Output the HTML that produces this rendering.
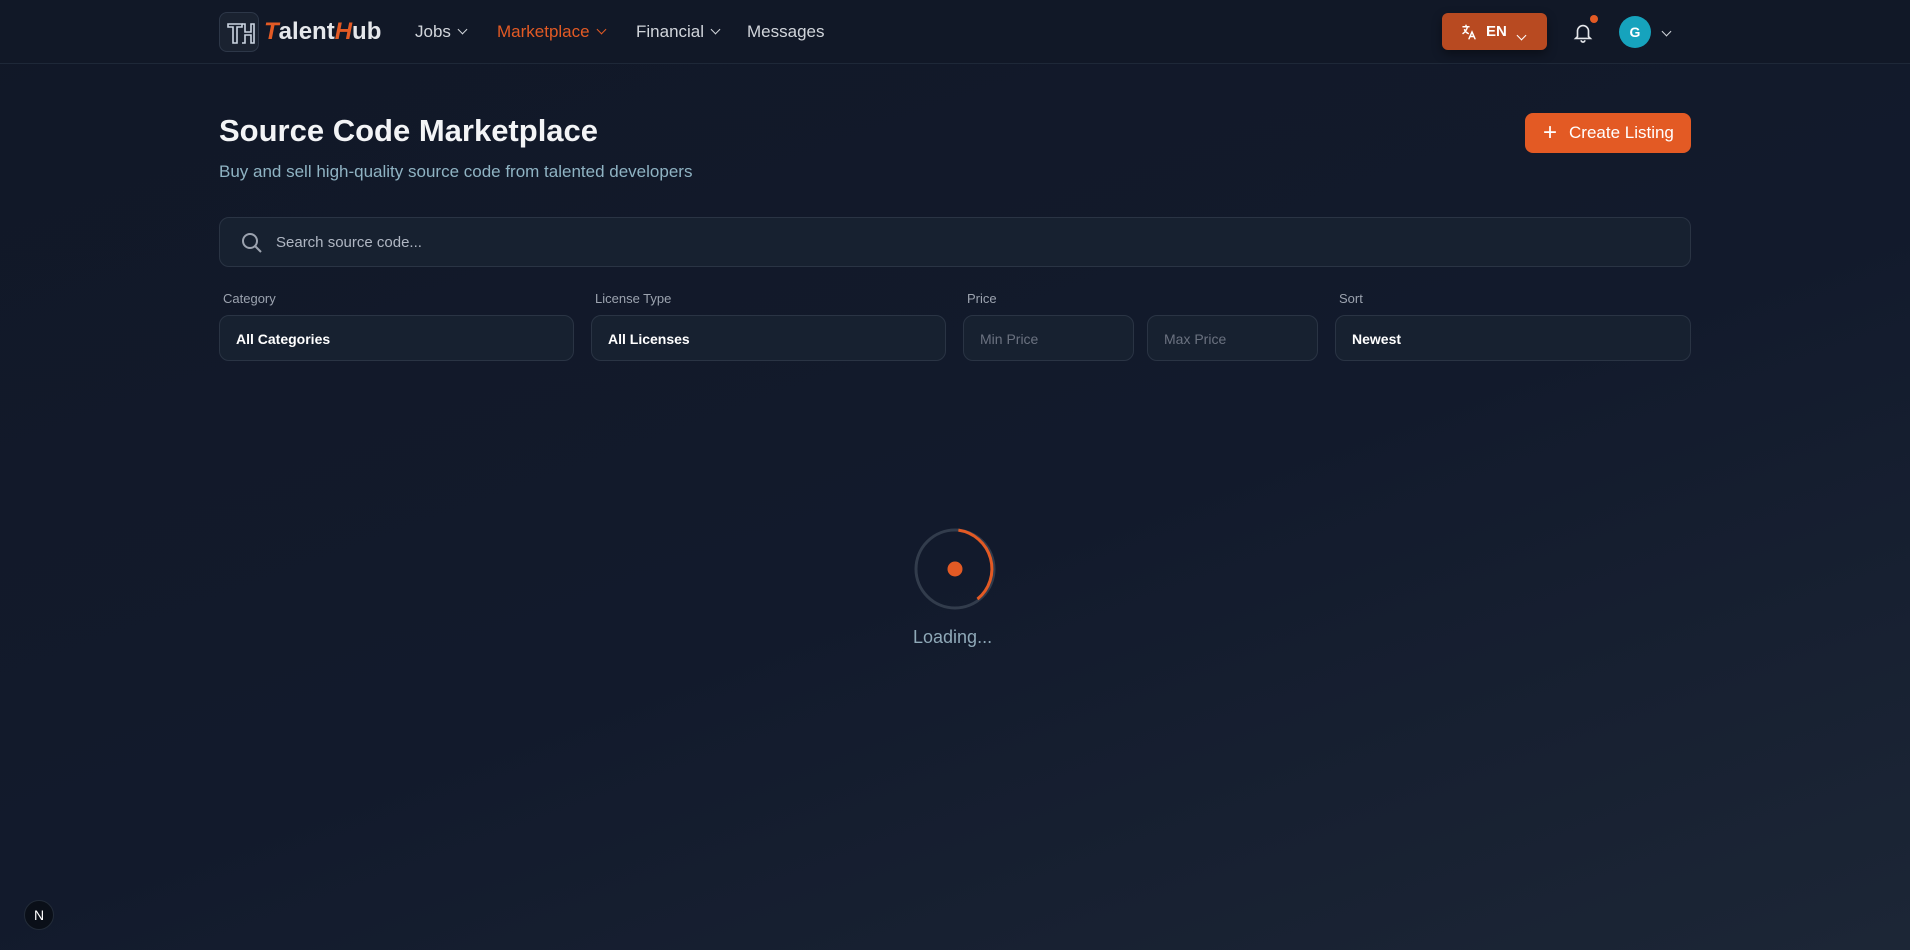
<!DOCTYPE html>
<html><head><meta charset="utf-8"><style>
*{box-sizing:border-box;margin:0;padding:0}
body{width:1910px;height:950px;overflow:hidden;font-family:"Liberation Sans",sans-serif;background:linear-gradient(160deg,#111827 0%,#121a2c 55%,#1c2636 100%);color:#e5e7eb;position:relative}
.nav{position:absolute;left:0;top:0;width:1910px;height:64px;border-bottom:1px solid #1e2838;background:#111827}
.abs{position:absolute}
.logo{left:219px;top:12px;width:40px;height:40px;border:1px solid #2d3748;border-radius:8px;background:#1a2230}
.brand{left:264px;top:18px;font-size:24px;font-weight:bold;color:#e5e7eb}
.brand i{color:#e35a24}
.ni{top:22px;font-size:17px;color:#d1d5db}
.chev{display:inline-block;width:7px;height:7px;border-right:1.5px solid currentColor;border-bottom:1.5px solid currentColor;transform:rotate(45deg);margin-left:8px;position:relative;top:-4px}
.en{left:1442px;top:13px;width:105px;height:37px;background:#b84a21;border-radius:6px;color:#fff;font-weight:bold;font-size:15px;box-shadow:0 4px 10px rgba(0,0,0,.4)}
.box{border:1px solid #2a3444;background:#172130;border-radius:10px}
.lbl{top:291px;font-size:13px;color:#9ca3af}
.inp{top:315px;height:46px;font-size:14px;padding:15px 16px;color:#fff;font-weight:bold}
.ph{color:#6b7280;font-weight:normal}
</style></head><body>
<div class="nav"></div>
<div class="abs logo"><svg width="40" height="40" viewBox="0 0 40 40" fill="none" stroke="#cbd5e1" stroke-width="1.6"><path d="M8 11h14v3h-5v16h-4V14H8z"/><path d="M22 11h3v8h6v-8h3v19h-3v-8h-6v8h-3"/></svg></div>
<div class="abs brand"><i>T</i>alent<i>H</i>ub</div>
<div class="abs ni" style="left:415px">Jobs<span class="chev"></span></div>
<div class="abs ni" style="left:497px;color:#e35a24">Marketplace<span class="chev"></span></div>
<div class="abs ni" style="left:636px">Financial<span class="chev"></span></div>
<div class="abs ni" style="left:747px">Messages</div>
<div class="abs en"><svg class="abs" style="left:18px;top:10px" width="18" height="18" viewBox="0 0 24 24" fill="none" stroke="#fff" stroke-width="2" stroke-linecap="round"><path d="M4 5h8M8 3v2M10 5c-1 4-3 7-6 9M6 9c1 2 3 4 5 5M12 21l4-9 4 9M13.5 18h5"/></svg><span class="abs" style="left:44px;top:10px">EN</span><span class="abs chev" style="left:76px;top:13px;color:#fff;margin:0"></span></div>
<svg class="abs" style="left:1572px;top:20px" width="22" height="24" viewBox="0 0 24 24" fill="none" stroke="#e5e7eb" stroke-width="1.8"><path d="M6 17V11a6 6 0 0 1 12 0v6l2 2H4z"/><path d="M10 21a2 2 0 0 0 4 0"/></svg>
<div class="abs" style="left:1590px;top:15px;width:8px;height:8px;border-radius:50%;background:#e35a24"></div>
<div class="abs" style="left:1619px;top:16px;width:32px;height:32px;border-radius:50%;background:#16a3bd;color:#fff;font-weight:bold;font-size:14px;text-align:center;line-height:32px">G</div>
<span class="abs chev" style="left:1663px;top:22px;margin:0;color:#d1d5db"></span>
<div class="abs" style="left:219px;top:113px;font-size:31px;font-weight:bold;color:#f3f4f6">Source Code Marketplace</div>
<div class="abs" style="left:219px;top:162px;font-size:17px;color:#8fb3c3">Buy and sell high-quality source code from talented developers</div>
<div class="abs" style="left:1525px;top:113px;width:166px;height:40px;background:#e35a24;border-radius:8px;color:#fff;font-size:17px;line-height:40px"><span style="position:absolute;left:18px;top:1px;font-size:24px;line-height:38px">+</span><span style="position:absolute;left:44px">Create Listing</span></div>
<div class="abs box" style="left:219px;top:217px;width:1472px;height:50px"><svg class="abs" style="left:20px;top:13px" width="24" height="24" viewBox="0 0 24 24" fill="none" stroke="#9ca3af" stroke-width="2"><circle cx="10" cy="10" r="7"/><path d="M15 15l6 6"/></svg><span class="abs" style="left:56px;top:16px;font-size:15px;color:#b0b7c3">Search source code...</span></div>
<div class="abs lbl" style="left:223px">Category</div>
<div class="abs lbl" style="left:595px">License Type</div>
<div class="abs lbl" style="left:967px">Price</div>
<div class="abs lbl" style="left:1339px">Sort</div>
<div class="abs box inp" style="left:219px;width:355px">All Categories</div>
<div class="abs box inp" style="left:591px;width:355px">All Licenses</div>
<div class="abs box inp" style="left:963px;width:171px"><span class="ph">Min Price</span></div>
<div class="abs box inp" style="left:1147px;width:171px"><span class="ph">Max Price</span></div>
<div class="abs box inp" style="left:1335px;width:356px">Newest</div>
<svg class="abs" style="left:913px;top:527px" width="84" height="84" viewBox="0 0 84 84" fill="none"><circle cx="42" cy="42" r="39" stroke="#323c4c" stroke-width="3"/><path d="M42 3a39 39 0 0 1 25 67" stroke="#e35a24" stroke-width="3" transform="rotate(5 42 42)"/><circle cx="42" cy="42" r="7.5" fill="#e35a24"/></svg>
<div class="abs" style="left:913px;top:627px;font-size:18px;color:#8fa9b8">Loading...</div>
<div class="abs" style="left:24px;top:900px;width:30px;height:30px;border-radius:50%;background:#0a0f18;border:1px solid #222b38;color:#fff;font-size:14px;text-align:center;line-height:28px">N</div>
</body></html>
